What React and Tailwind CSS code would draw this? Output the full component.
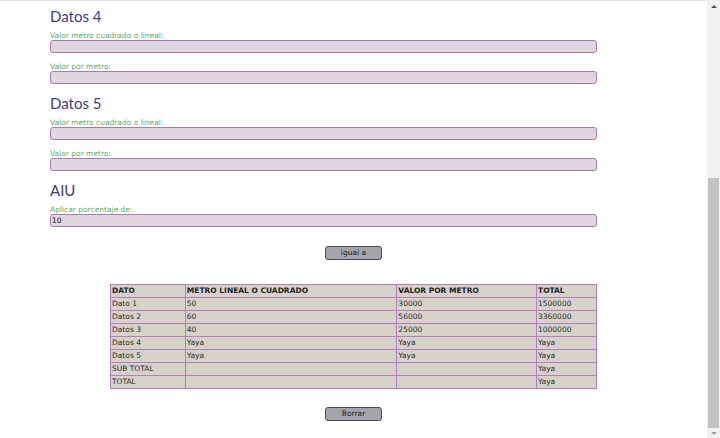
const rows = [
  ['Dato 1', '50', '30000', '1500000'],
  ['Datos 2', '60', '56000', '3360000'],
  ['Datos 3', '40', '25000', '1000000'],
  ['Datos 4', 'Yaya', 'Yaya', 'Yaya'],
  ['Datos 5', 'Yaya', 'Yaya', 'Yaya'],
  ['SUB TOTAL', '', '', 'Yaya'],
  ['TOTAL', '', '', 'Yaya'],
];

function Field({ label, value = '', gap = false }) {
  return (
    <div className={gap ? 'mt-[2px]' : ''}>
      <div className="flex h-[16px] items-end pb-[1px] text-[7.5px] leading-none text-[#5aaa62]">{label}</div>
      <div className="flex h-[13px] w-[547px] items-center rounded-[3px] border border-[#a67cb0] bg-[#e2d6de] px-[1px] text-[7.5px] leading-none text-[#111]">
        {value}
      </div>
    </div>
  );
}

function Section({ title, children }) {
  return (
    <div className="mb-[7px]">
      <h2 className="flex h-[20px] items-end font-['Lato',sans-serif] text-[15px] leading-none text-[#3d3b8a]">{title}</h2>
      {children}
    </div>
  );
}

function GrayButton({ children }) {
  return (
    <div className="flex justify-center">
      <button className="h-[14px] w-[57px] rounded-[3px] border border-[#4a4a52] bg-[#a5a5ad] text-[7.5px] leading-none text-[#1a1a1a]">
        {children}
      </button>
    </div>
  );
}

function Scrollbar() {
  return (
    <div className="flex h-full w-[13px] flex-col bg-[#f1f1f1]">
      <div className="flex h-[12px] items-center justify-center">
        <div className="h-0 w-0 border-x-[3px] border-b-[3px] border-x-transparent border-b-[#505050]" />
      </div>
      <div className="h-[166px]" />
      <div className="mx-auto h-[250px] w-[11px] bg-[#c1c1c1]" />
      <div className="flex flex-1 items-center justify-center">
        <div className="h-0 w-0 border-x-[3px] border-t-[3px] border-x-transparent border-t-[#a3a3a3]" />
      </div>
    </div>
  );
}

export default function App() {
  return (
    <div className="flex h-[438px] w-[720px] overflow-hidden bg-white font-['DejaVu_Sans',sans-serif]">
      <div className="flex-1">
        <div className="h-[1px] bg-[#e2e2e2]" />
        <div className="pl-[50px] pt-[3px]">
          <Section title="Datos 4">
            <Field label="Valor metro cuadrado o lineal:" />
            <Field label="Valor por metro:" gap />
          </Section>
          <Section title="Datos 5">
            <Field label="Valor metro cuadrado o lineal:" />
            <Field label="Valor por metro:" gap />
          </Section>
          <Section title="AIU">
            <Field label="Aplicar porcentaje de:" value="10" />
          </Section>
        </div>
        <div className="mt-[19px]">
          <GrayButton>igual a</GrayButton>
        </div>
        <div className="mt-[24px] flex justify-center">
          <table className="w-[487px] border-collapse border border-[#b47cc4] bg-[#d6d2c8] text-[7.5px] leading-none text-[#2a2a2a]">
            <colgroup>
              <col className="w-[75px]" />
              <col className="w-[212px]" />
              <col className="w-[140px]" />
              <col className="w-[60px]" />
            </colgroup>
            <thead>
              <tr className="h-[13px]">
                {['DATO', 'METRO LINEAL O CUADRADO', 'VALOR POR METRO', 'TOTAL'].map((h) => (
                  <th key={h} className="border border-[#b47cc4] px-[1px] text-left font-bold text-[#222]">
                    {h}
                  </th>
                ))}
              </tr>
            </thead>
            <tbody>
              {rows.map((r) => (
                <tr key={r[0]} className="h-[13px]">
                  {r.map((c, i) => (
                    <td key={i} className="border border-[#b47cc4] px-[1px] text-left">
                      {c}
                    </td>
                  ))}
                </tr>
              ))}
            </tbody>
          </table>
        </div>
        <div className="mt-[18px]">
          <GrayButton>Borrar</GrayButton>
        </div>
      </div>
      <Scrollbar />
    </div>
  );
}
